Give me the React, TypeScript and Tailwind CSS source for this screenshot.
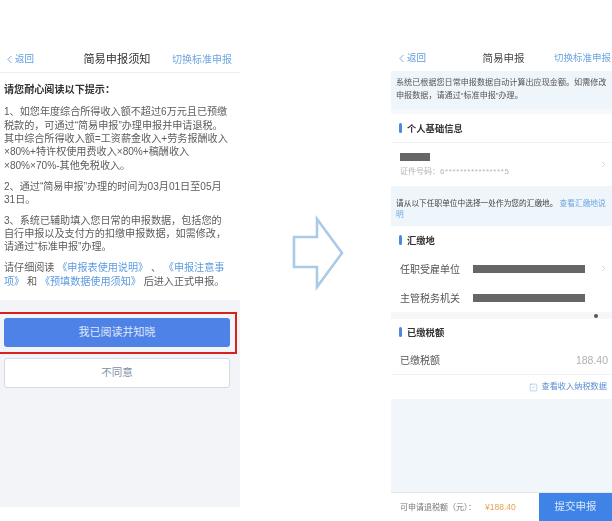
import { ChevronLeft, ChevronRight, SquareCheck } from "lucide-react";

const font = { fontFamily: '"Liberation Sans", "Noto Sans CJK SC", sans-serif' };

function SectionTitle({ label }: { label: string }) {
  return (
    <div className="flex items-center gap-[5px] pl-2">
      <span className="h-[10px] w-[3px] rounded-sm bg-[#4f86e0]" />
      <span className="mt-[4px] text-[9.3px] font-semibold text-[#333]">{label}</span>
    </div>
  );
}

function Redacted({ width }: { width: string }) {
  return <span className={`h-[8px] bg-[#666] ${width}`} />;
}

function LeftPanel() {
  return (
    <div className="flex h-[463px] w-[240px] flex-col bg-white">
      <div className="flex h-[29px] shrink-0 items-center justify-between border-b border-[#eeeeee] pl-[3px] pr-[8px] pt-[2px]">
        <div className="flex w-[50px] items-center text-[9.5px] text-[#5b9be0]">
          <ChevronLeft size={13} strokeWidth={1.5} className="-mr-[1px]" />
          返回
        </div>
        <span className="ml-[9px] text-[11.2px] text-[#333]">简易申报须知</span>
        <span className="text-[10px] text-[#6ea6e0]">切换标准申报</span>
      </div>
      <div className="flex h-[227px] shrink-0 flex-col gap-[7.3px] px-[4px] pt-[10px] text-[10.1px] leading-[13.4px] text-[#5c5c5c]">
        <p className="mb-[1.5px] font-semibold text-[#333]">{"请您耐心阅读以下提示\uFF1A"}</p>
        <p>
          1、如您年度综合所得收入额不超过6万元且已预缴
          <br />
          {"税款的\uFF0C可通过“简易申报”办理申报并申请退税。"}
          <br />
          其中综合所得收入额=工资薪金收入+劳务报酬收入
          <br />
          ×80%+特许权使用费收入×80%+稿酬收入
          <br />
          ×80%×70%-其他免税收入。
        </p>
        <p>
          2、通过“简易申报”办理的时间为03月01日至05月
          <br />
          31日。
        </p>
        <p>
          {"3、系统已辅助填入您日常的申报数据\uFF0C包括您的"}
          <br />
          {"自行申报以及支付方的扣缴申报数据\uFF0C如需修改\uFF0C"}
          <br />
          请通过“标准申报”办理。
        </p>
        <p>
          请仔细阅读 <span className="text-[#5b9be0]">《申报表使用说明》</span> 、{" "}
          <span className="text-[#5b9be0]">《申报注意事</span>
          <br />
          <span className="text-[#5b9be0]">项》</span> 和 <span className="text-[#5b9be0]">《预填数据使用须知》</span> 后进入正式申报。
        </p>
      </div>
      <div className="relative flex flex-1 flex-col gap-[11px] bg-[#f3f4f8] px-[4px] pt-[18px]">
        <div className="absolute left-[-2px] top-[12px] h-[42px] w-[239px] border-2 border-[#d8201f]" />
        <button className="h-[29px] w-[226px] rounded-[3px] bg-[#4f82e6] text-[11px] text-[#dfe8fa]">我已阅读并知晓</button>
        <button className="h-[30px] w-[226px] rounded-[3px] border border-[#d5dae2] bg-white text-[10.5px] text-[#7f8fa8]">不同意</button>
      </div>
    </div>
  );
}

function Arrow() {
  return (
    <div className="flex w-[151px] shrink-0 justify-center pt-[215px]">
      <svg width="56" height="76" viewBox="0 0 56 76" fill="none">
        <path d="M6 22H29V4L54 38L29 72V52H6Z" stroke="#a9cbe8" strokeWidth="2.6" />
      </svg>
    </div>
  );
}

function RightPanel() {
  return (
    <div className="flex h-[521px] w-[221px] flex-col bg-white pt-[44px]">
      <div className="flex h-[27px] shrink-0 items-center justify-between pl-[4px] pr-[1px] pt-[2px]">
        <div className="flex w-[52px] items-center text-[9.5px] text-[#5b9be0]">
          <ChevronLeft size={13} strokeWidth={1.5} className="-mr-[1px]" />
          返回
        </div>
        <span className="ml-[6px] text-[10.5px] text-[#444]">简易申报</span>
        <span className="text-[9.5px] text-[#6ea6e0]">切换标准申报</span>
      </div>
      <div className="h-[38px] shrink-0 whitespace-nowrap bg-[#eef5fb] px-[5px] pt-[5px] text-[8.1px] leading-[13px] text-[#555]">
        {"系统已根据您日常申报数据自动计算出应现金额。如需修改"}
        <br />
        {"申报数据\uFF0C请通过“标准申报”办理。"}
      </div>
      <div className="h-[5px] shrink-0 bg-[#f6f8fa]" />
      <div className="flex h-[29px] shrink-0 items-center border-b border-[#f2f2f2]">
        <SectionTitle label="个人基础信息" />
      </div>
      <div className="flex h-[43px] shrink-0 items-center justify-between pl-[9px] pr-[4px]">
        <div className="flex flex-col">
          <span className="h-[8px] w-[30px] bg-[#666]" />
          <span className="mt-[6px] text-[8px] leading-[10px] text-[#b5b5b5]">
            {"证件号码\uFF1A"}
            <span className="tracking-[0.6px]">6****************5</span>
          </span>
        </div>
        <ChevronRight size={9} className="text-[#c4c4c4]" />
      </div>
      <div className="h-[40px] shrink-0 whitespace-nowrap bg-[#eef5fb] px-[5px] pt-[12px] text-[7.7px] leading-[11px] text-[#444]">
        请从以下任职单位中选择一处作为您的汇缴地。 <span className="text-[#6ea6e0]">查看汇缴地说</span>
        <br />
        <span className="text-[#6ea6e0]">明</span>
      </div>
      <div className="flex h-[28px] shrink-0 items-center">
        <SectionTitle label="汇缴地" />
      </div>
      <div className="flex h-[29px] shrink-0 items-center pl-[9px] pr-[4px] text-[10px] text-[#555]">
        <span className="mt-[2px] w-[73px]">任职受雇单位</span>
        <Redacted width="w-[112px]" />
        <ChevronRight size={9} className="ml-auto text-[#c4c4c4]" />
      </div>
      <div className="flex h-[29px] shrink-0 items-center pl-[9px] pr-[4px] text-[10px] text-[#555]">
        <span className="mt-[2px] w-[73px]">主管税务机关</span>
        <Redacted width="w-[112px]" />
      </div>
      <div className="flex h-[7px] shrink-0 items-center justify-end bg-[#f6f7f9] pr-[14px]">
        <span className="h-[4px] w-[4px] rounded-full bg-[#555]" />
      </div>
      <div className="flex h-[26px] shrink-0 items-center">
        <SectionTitle label="已缴税额" />
      </div>
      <div className="flex h-[30px] shrink-0 items-center justify-between border-b border-[#f2f2f2] pl-[9px] pr-[4px] pt-[2px] text-[10px] text-[#555]">
        <span>已缴税额</span>
        <span className="text-[10.5px] text-[#b0b0b0]">188.40</span>
      </div>
      <div className="flex h-[24px] shrink-0 items-center justify-end gap-[3px] pr-[5px] text-[8.2px] text-[#5b8fd0]">
        <SquareCheck size={9} strokeWidth={1.5} className="text-[#8db4de]" />
        查看收入纳税数据
      </div>
      <div className="flex-1 bg-[#f1f6fb]" />
      <div className="flex h-[29px] shrink-0 items-center justify-between border-t border-[#e6e6e6] pl-[9px]">
        <span className="text-[8px] text-[#777]">
          {"可申请退税额\uFF08元\uFF09\uFF1A"}
          <span className="ml-[9px] text-[8.5px] font-medium text-[#e9a24d]">¥188.40</span>
        </span>
        <button className="h-full w-[73px] bg-[#3f83e6] text-[10.5px] text-[#dbe8fb]">提交申报</button>
      </div>
    </div>
  );
}

export default function App() {
  return (
    <div className="flex h-[521px] w-[612px] overflow-hidden bg-white" style={font}>
      <div className="flex w-full blur-[0.6px]">
        <div className="shrink-0 pt-[44px]">
          <LeftPanel />
        </div>
        <Arrow />
        <RightPanel />
      </div>
    </div>
  );
}
